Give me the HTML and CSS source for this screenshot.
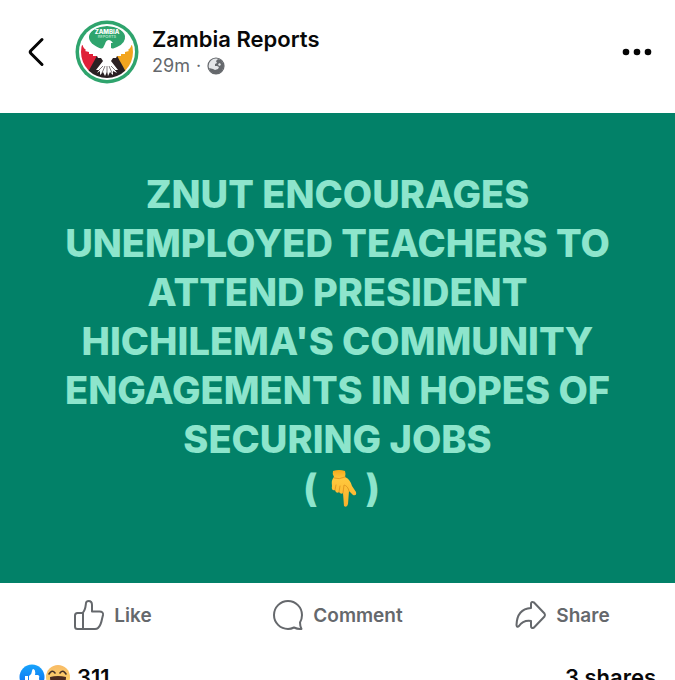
FILE: index.html
```html
<!DOCTYPE html>
<html lang="en">
<head>
<meta charset="utf-8">
<meta name="viewport" content="width=device-width, initial-scale=1">
<title>Zambia Reports</title>
<link rel="stylesheet" href="styles.css">
</head>
<body>
<article class="post">
  <header class="header">
    <button class="icon-button" aria-label="Back">
      <svg width="18" height="32" viewBox="0 0 18 32" fill="none" stroke="#050505" stroke-width="3" stroke-linecap="round" stroke-linejoin="round"><path d="M15 3.500L4 14.500Q2.500 16 4 17.500L15 28.500"/></svg>
    </button>
    <svg class="avatar" viewBox="0 0 64 64" role="img" aria-label="Zambia Reports logo">
      <defs><clipPath id="disc"><circle cx="32" cy="32" r="26"/></clipPath></defs>
      <circle cx="32" cy="32" r="31.500" fill="#2fa46d"/>
      <circle cx="32" cy="32" r="28" fill="#fff"/>
      <g clip-path="url(#disc)">
        <path d="M4 24L10 26L24 35L15 53L6 50Z" fill="#df2138"/>
        <path d="M60 24L54 26L40 35L49 53L58 50Z" fill="#f2a51f"/>
        <path d="M23 34H41L51 52L45 62H19L13 52Z" fill="#2a2023"/>
        <path d="M14 16Q17 6 32 6Q47 6 50 16Q51 23 42 27L37 29H27Q13 24 14 16Z" fill="#2fa46d"/>
      </g>
      <path d="M30 24Q31 20 34 20Q36 20 38 23L36 23L36 28L41 30Q48 29 56 24Q57 27 53 30L54 31L50 32L50 34L46 34L46 36L42 36L41 38L38 38L36 41L43 50L40 50L42 53L38 51L38 55L35 52L33 56L32 52L30 56L28 52L25 55L25 51L22 53L24 50L21 50L28 41L26 38L23 38L22 36L18 36L18 34L14 34L14 32L10 31L11 30Q7 27 8 24Q16 29 23 30L28 28Z" fill="#fff"/>
      <path d="M32 46V55M34 46L37 53M30 46L27 53M36 46L41 51M28 46L23 51" stroke="#2a2023" stroke-width=".6"/>
      <text class="logo-name" x="32" y="14" text-anchor="middle">ZAMBIA</text>
      <text class="logo-sub" x="32" y="18" text-anchor="middle">REPORTS</text>
    </svg>
    <div class="identity">
      <a class="name" href="#">Zambia Reports</a>
      <div class="meta"><span>29m</span><span>·</span>
        <svg width="18" height="18" viewBox="0 0 18 18" role="img" aria-label="Public"><circle cx="9" cy="9" r="8" fill="#e4e6e8" stroke="#65686c" stroke-width="1.200"/><path d="M11 2L14 3L16.500 7L17 9L15 14L11 17L7 17L3 14L2 11L6 12L8 13L11 12L12 10L10 9L8 9L8 7L10 6L9 4Z" fill="#65686c"/><path d="M12 6L14 7L13 9L11 8Z" fill="#e4e6e8"/></svg>
      </div>
    </div>
    <button class="icon-button more" aria-label="More options">
      <svg width="30" height="8" viewBox="0 0 30 8" fill="#050505"><circle cx="4" cy="4" r="3.300"/><circle cx="15" cy="4" r="3.300"/><circle cx="26" cy="4" r="3.300"/></svg>
    </button>
  </header>

  <p class="message">ZNUT ENCOURAGES<br>UNEMPLOYED TEACHERS TO<br>ATTEND PRESIDENT<br>HICHILEMA'S COMMUNITY<br>ENGAGEMENTS IN HOPES OF<br>SECURING JOBS<br><span class="pointer">(<svg width="48" height="49" viewBox="-6 -5 48 49" role="img" aria-label="Pointing down">
    <defs><linearGradient id="skin" x2="0" y2="1"><stop stop-color="#f4a91b"/><stop offset=".25" stop-color="#ffc83d"/><stop offset="1" stop-color="#f9b02c"/></linearGradient></defs>
    <path d="M9 2Q15 0 21 2Q22 5 21 8Q26 10 28 17L32 23Q33 27 29 26L25 22L24 35Q23 39 20 37L19 24Q17 26 15 23Q12 25 11 21Q7 22 8 17Q7 11 10 8Q8 5 9 2Z" fill="url(#skin)"/>
    <path d="M10 9Q15 11 21 8M11 21L12 16M15 23L16 17M19 24L20 16Q24 17 25 22" fill="none" stroke="#e39a22" stroke-width="1" stroke-linecap="round"/>
  </svg>)</span></p>

  <div class="actions">
    <button class="action">
      <svg width="32" height="32" viewBox="0 0 32 32"><path d="M2 16.500Q2 14 4.500 14H9.500C12.500 11.500 12.500 8 13 4Q13.500 2 15.500 2Q19 2 19 6V12.500H26.500Q30.500 12.500 30 16L29 20Q28 26 25 29Q24 30 22 30H4.500Q2 30 2 27.500ZM10 14V30"/></svg>
      Like
    </button>
    <button class="action">
      <svg width="32" height="32" viewBox="0 0 32 32"><path d="M30 16A14 14 0 1 0 16 30Q19 30 22 28.500Q26 30.500 29.500 30Q28 27 28 23.500Q30 20 30 16Z"/></svg>
      Comment
    </button>
    <button class="action">
      <svg width="32" height="32" viewBox="0 0 32 32"><path d="M16 9V5Q16 2 19 3.500L29.500 14.500Q30.500 16 29.500 17.500L19 28.500Q16 30 16 27V22Q8 21 4 27Q2 29 1.500 26Q2 10 16 9Z"/></svg>
      Share
    </button>
  </div>

  <footer class="summary">
    <div class="reactions">
      <svg width="52" height="28" viewBox="0 0 52 28" role="img" aria-label="Like and haha">
        <defs>
          <linearGradient id="blue" x2="0" y2="1"><stop stop-color="#18a4fb"/><stop offset="1" stop-color="#0866f0"/></linearGradient>
          <linearGradient id="yellow" x2="0" y2="1"><stop stop-color="#f8bb65"/><stop offset="1" stop-color="#ffda70"/></linearGradient>
        </defs>
        <circle cx="39" cy="14" r="12" fill="url(#yellow)"/>
        <path d="M30 11Q33 6 36 10M41 10Q44 6 47 11" fill="none" stroke="#453127" stroke-width="1.600" stroke-linecap="round"/>
        <path d="M31 14Q39 12 47 14Q47 23 39 23Q31 23 31 14Z" fill="#4b2a20"/>
        <circle cx="13" cy="14" r="13.500" fill="#fff"/>
        <circle cx="13" cy="14" r="12.500" fill="url(#blue)"/>
        <path d="M6 13H9V22H6ZM10 13Q13 11 13 8Q13 6 14.500 6Q17 7 16 12H19Q21 13 20 15Q21 21 17 22H10Z" fill="#fff"/>
      </svg>
      <span>311</span>
    </div>
    <a class="shares" href="#">3 shares</a>
  </footer>
</article>
</body>
</html>
```
FILE: styles.css
```css
* { box-sizing: border-box; }

body {
  margin: 0;
  background: #fff;
  color: #080809;
  font-family: Inter, "Liberation Sans", sans-serif;
}

button {
  margin: 0;
  padding: 0;
  border: 0;
  background: none;
  color: inherit;
  font: inherit;
  cursor: pointer;
}

a { color: inherit; text-decoration: none; }
svg { display: block; flex: none; }

.post {
  height: 100vh;
  overflow: hidden;
}

.header {
  display: flex;
  align-items: center;
  padding: 20px 23px 29px 27px;
}

.icon-button { display: flex; }

.avatar {
  width: 64px;
  height: 64px;
  margin: 0 13px 0 30px;
}

.logo-name { fill: #fff; font-size: 6px; font-weight: 800; }
.logo-sub { fill: #b9e6cf; font-size: 4px; font-weight: 500; }

.identity { flex: 1; }

.name {
  display: block;
  font-size: 22px;
  font-weight: 600;
  line-height: 28px;
}

.meta {
  display: flex;
  align-items: center;
  gap: 6px;
  color: #65686c;
  font-size: 18px;
  line-height: 26px;
}

.message {
  margin: 0;
  padding: 57px 24px 70px;
  background: #028168;
  color: #8de5cc;
  font-size: 38px;
  font-weight: 800;
  line-height: 49px;
  text-align: center;
}

.pointer {
  display: flex;
  justify-content: center;
  padding-left: 8px;
}

.actions {
  display: grid;
  grid-template-columns: repeat(3, 1fr);
  height: 64px;
}

.action {
  display: flex;
  align-items: center;
  justify-content: center;
  gap: 9px;
  color: #65686c;
  font-size: 19px;
  font-weight: 600;
}

.action svg {
  fill: none;
  stroke: currentColor;
  stroke-width: 2;
  stroke-linejoin: round;
}

.summary {
  display: flex;
  align-items: center;
  justify-content: space-between;
  padding: 16px 19px;
  font-size: 22px;
  font-weight: 600;
  line-height: 28px;
}

.reactions {
  display: flex;
  align-items: center;
  gap: 6px;
}
```
